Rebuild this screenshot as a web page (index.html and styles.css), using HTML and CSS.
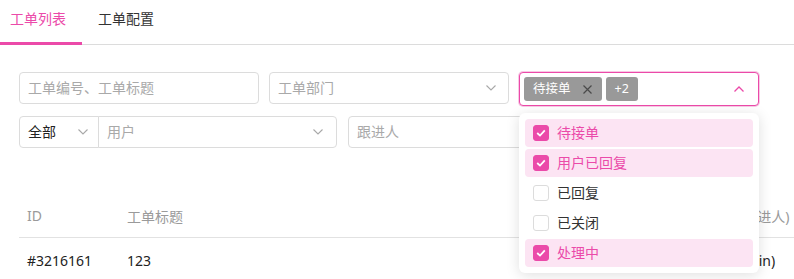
FILE: index.html
```html
<!DOCTYPE html>
<html lang="zh">
<head>
<meta charset="utf-8">
<link rel="stylesheet" href="styles.css">
</head>
<body>
<div class="tabs">
  <div class="tab active">工单列表</div>
  <div class="tab">工单配置</div>
</div>
<div class="content">
  <div class="filters">
    <div class="row">
      <div class="field"><span class="ph">工单编号、工单标题</span></div>
      <div class="field"><span class="ph">工单部门</span>
        <svg class="chev" width="10" height="6" viewBox="0 0 10 6"><path d="M0.5 0.5 L5 5 L9.5 0.5" fill="none" stroke="#a8a8a8" stroke-width="1.1"/></svg>
      </div>
      <div class="field focus">
        <span class="tag">待接单<svg class="x" width="9" height="9" viewBox="0 0 9 9"><path d="M0.5 0.5 L8.5 8.5 M8.5 0.5 L0.5 8.5" stroke="#4a4a4a" stroke-width="1.2"/></svg></span>
        <span class="tag">+2</span>
        <svg class="chev up" width="10" height="6" viewBox="0 0 10 6"><path d="M0.5 5.5 L5 1 L9.5 5.5" fill="none" stroke="#eb4aa9" stroke-width="1.3"/></svg>
        <div class="dropdown">
          <div class="opt on"><span class="cb"><svg width="10" height="8" viewBox="0 0 10 8"><path d="M1.2 4 L4 6.6 L8.8 1.4" fill="none" stroke="#fff" stroke-width="1.8"/></svg></span>待接单</div>
          <div class="opt on"><span class="cb"><svg width="10" height="8" viewBox="0 0 10 8"><path d="M1.2 4 L4 6.6 L8.8 1.4" fill="none" stroke="#fff" stroke-width="1.8"/></svg></span>用户已回复</div>
          <div class="opt"><span class="cb"></span>已回复</div>
          <div class="opt"><span class="cb"></span>已关闭</div>
          <div class="opt on"><span class="cb"><svg width="10" height="8" viewBox="0 0 10 8"><path d="M1.2 4 L4 6.6 L8.8 1.4" fill="none" stroke="#fff" stroke-width="1.8"/></svg></span>处理中</div>
        </div>
      </div>
    </div>
    <div class="row">
      <div class="group">
        <div class="field small"><span class="val">全部</span>
          <svg class="chev" width="10" height="6" viewBox="0 0 10 6"><path d="M0.5 0.5 L5 5 L9.5 0.5" fill="none" stroke="#a8a8a8" stroke-width="1.1"/></svg>
        </div>
        <div class="field user"><span class="ph">用户</span>
          <svg class="chev" width="10" height="6" viewBox="0 0 10 6"><path d="M0.5 0.5 L5 5 L9.5 0.5" fill="none" stroke="#a8a8a8" stroke-width="1.1"/></svg>
        </div>
      </div>
      <div class="field"><span class="ph">跟进人</span></div>
    </div>
  </div>
  <table class="list">
    <thead>
      <tr><th class="c-id">ID</th><th class="c-title">工单标题</th><th class="c-owner">负责人(跟进人)</th></tr>
    </thead>
    <tbody>
      <tr><td>#3216161</td><td>123</td><td>系统(admin)</td></tr>
    </tbody>
  </table>
</div>
</body>
</html>
```
FILE: styles.css
```css
* { box-sizing: border-box; }
html, body { margin: 0; padding: 0; background: #fff; overflow: hidden; }
body {
  font-family: "Noto Sans", "Noto Sans CJK SC", sans-serif;
  font-size: 14px;
  color: #333;
  width: 794px;
  height: 279px;
}
.tabs {
  display: flex;
  border-bottom: 1px solid #dcdcdc;
  height: 45px;
}
.tab {
  padding: 9px 16px 0;
  line-height: 20px;
  height: 45px;
  margin-bottom: -1px;
  color: #333;
}
.tab:first-child { padding-left: 10px; }
.tab.active {
  color: #eb4aa9;
  border-bottom: 3px solid #eb4aa9;
}
.content { padding-left: 19px; }
.filters {
  padding-top: 27px;
  display: flex;
  flex-direction: column;
  gap: 12px;
}
.row { display: flex; gap: 10px; align-items: flex-start; height: 32px; }
.field {
  position: relative;
  width: 240px;
  height: 32px;
  border: 1px solid #dcdcdc;
  border-radius: 4px;
  display: flex;
  align-items: center;
  padding: 0 8px;
  line-height: 20px;
  background: #fff;
}
.ph { color: #a9a9a9; }
.val { color: #222; }
.chev { margin-left: auto; margin-right: 4px; }
.field.focus {
  height: 34px;
  border-color: #eb4aa9;
  box-shadow: 0 0 0 1px #f8c9e5;
  padding: 0 4px;
  gap: 4px;
  z-index: 2;
}
.field.focus .chev { margin-right: 10px; }
.tag {
  height: 24px;
  background: #999;
  color: #fff;
  border-radius: 3px;
  font-size: 12.5px;
  line-height: 24px;
  padding: 0 9px 0 9px;
  display: inline-flex;
  align-items: center;
}
.tag .x { margin-left: 12px; margin-right: 1px; }
.dropdown {
  position: absolute;
  top: 40px;
  left: -1px;
  width: 240px;
  background: #fff;
  border-radius: 6px;
  box-shadow: 0 2px 14px rgba(0,0,0,0.13);
  padding: 6px;
  display: flex;
  flex-direction: column;
  gap: 2px;
}
.opt {
  height: 28px;
  border-radius: 4px;
  display: flex;
  align-items: center;
  padding-left: 8px;
  gap: 8px;
  color: #333;
}
.opt.on { background: #fce4f3; color: #eb4aa9; }
.cb {
  width: 16px;
  height: 16px;
  border-radius: 3px;
  border: 1px solid #dcdcdc;
  background: #fff;
  display: flex;
  align-items: center;
  justify-content: center;
}
.opt.on .cb { background: #eb4aa9; border-color: #eb4aa9; }
.group { display: flex; }
.field.small { width: 80px; border-radius: 4px 0 0 4px; }
.field.small .chev { margin-right: 2px; }
.field.user { width: 239px; border-radius: 0 4px 4px 0; margin-left: -1px; }
.field.user .chev { margin-right: 5px; }
.group + .field { margin-left: 1px; }
.list {
  margin-top: 48px;
  border-collapse: collapse;
  width: 775px;
  table-layout: fixed;
}
.list th {
  font-weight: normal;
  color: #9a9a9a;
  text-align: left;
  height: 41px;
  padding: 0 8px 1px;
  border-bottom: 1px solid #e2e2e2;
  white-space: nowrap;
}
.list td {
  height: 46px;
  padding: 0 8px;
  color: #222;
  white-space: nowrap;
}
.c-id { width: 100px; }
.c-title { width: 570px; }
.c-owner { width: 105px; }
```
